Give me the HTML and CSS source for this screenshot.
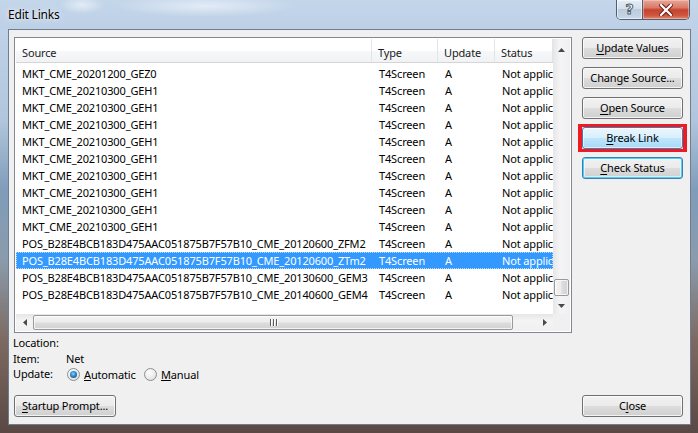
FILE: index.html
```html
<!DOCTYPE html>
<html lang="en">
<head>
<meta charset="utf-8">
<title>Edit Links</title>
<link rel="stylesheet" href="styles.css">
</head>
<body>
<div class="window">
  <div class="titlebar">
    <span class="title">Edit Links</span>
    <div class="caption">
      <div class="cap cap-help">?</div>
      <div class="cap cap-close">
        <svg width="14" height="12" viewBox="0 0 14 12">
          <path d="M2 1 L12 11 M12 1 L2 11" stroke="#6b1e16" stroke-width="4.2" stroke-linecap="square"/>
          <path d="M2 1 L12 11 M12 1 L2 11" stroke="#ffffff" stroke-width="2.2" stroke-linecap="square"/>
        </svg>
      </div>
    </div>
  </div>

  <div class="client">
    <div class="main">
      <div class="listview">
        <div class="lv-view">
          <div class="lv-header">
            <div class="cell c-src">Source</div>
            <div class="cell c-type">Type</div>
            <div class="cell c-upd">Update</div>
            <div class="cell c-stat">Status</div>
          </div>
          <div class="lv-rows">
            <div class="row"><span class="cell c-src">MKT_CME_20201200_GEZ0</span><span class="cell c-type">T4Screen</span><span class="cell c-upd">A</span><span class="cell c-stat">Not applicable</span></div>
            <div class="row"><span class="cell c-src">MKT_CME_20210300_GEH1</span><span class="cell c-type">T4Screen</span><span class="cell c-upd">A</span><span class="cell c-stat">Not applicable</span></div>
            <div class="row"><span class="cell c-src">MKT_CME_20210300_GEH1</span><span class="cell c-type">T4Screen</span><span class="cell c-upd">A</span><span class="cell c-stat">Not applicable</span></div>
            <div class="row"><span class="cell c-src">MKT_CME_20210300_GEH1</span><span class="cell c-type">T4Screen</span><span class="cell c-upd">A</span><span class="cell c-stat">Not applicable</span></div>
            <div class="row"><span class="cell c-src">MKT_CME_20210300_GEH1</span><span class="cell c-type">T4Screen</span><span class="cell c-upd">A</span><span class="cell c-stat">Not applicable</span></div>
            <div class="row"><span class="cell c-src">MKT_CME_20210300_GEH1</span><span class="cell c-type">T4Screen</span><span class="cell c-upd">A</span><span class="cell c-stat">Not applicable</span></div>
            <div class="row"><span class="cell c-src">MKT_CME_20210300_GEH1</span><span class="cell c-type">T4Screen</span><span class="cell c-upd">A</span><span class="cell c-stat">Not applicable</span></div>
            <div class="row"><span class="cell c-src">MKT_CME_20210300_GEH1</span><span class="cell c-type">T4Screen</span><span class="cell c-upd">A</span><span class="cell c-stat">Not applicable</span></div>
            <div class="row"><span class="cell c-src">MKT_CME_20210300_GEH1</span><span class="cell c-type">T4Screen</span><span class="cell c-upd">A</span><span class="cell c-stat">Not applicable</span></div>
            <div class="row"><span class="cell c-src">MKT_CME_20210300_GEH1</span><span class="cell c-type">T4Screen</span><span class="cell c-upd">A</span><span class="cell c-stat">Not applicable</span></div>
            <div class="row"><span class="cell c-src">POS_B28E4BCB183D475AAC051875B7F57B10_CME_20120600_ZFM2</span><span class="cell c-type">T4Screen</span><span class="cell c-upd">A</span><span class="cell c-stat">Not applicable</span></div>
            <div class="row selected"><span class="cell c-src">POS_B28E4BCB183D475AAC051875B7F57B10_CME_20120600_ZTm2</span><span class="cell c-type">T4Screen</span><span class="cell c-upd">A</span><span class="cell c-stat">Not applicable</span></div>
            <div class="row"><span class="cell c-src">POS_B28E4BCB183D475AAC051875B7F57B10_CME_20130600_GEM3</span><span class="cell c-type">T4Screen</span><span class="cell c-upd">A</span><span class="cell c-stat">Not applicable</span></div>
            <div class="row"><span class="cell c-src">POS_B28E4BCB183D475AAC051875B7F57B10_CME_20140600_GEM4</span><span class="cell c-type">T4Screen</span><span class="cell c-upd">A</span><span class="cell c-stat">Not applicable</span></div>
          </div>
        </div>

        <div class="vscroll">
          <div class="sb-btn"><svg width="7" height="4" viewBox="0 0 7 4"><path d="M0 4 L3.5 0 L7 4 Z" fill="#4a4a4a"/></svg></div>
          <div class="vtrack"><div class="vthumb"></div></div>
          <div class="sb-btn"><svg width="7" height="4" viewBox="0 0 7 4"><path d="M0 0 L7 0 L3.5 4 Z" fill="#4a4a4a"/></svg></div>
        </div>

        <div class="hscroll">
          <div class="sb-btn"><svg width="4" height="7" viewBox="0 0 4 7"><path d="M4 0 L4 7 L0 3.5 Z" fill="#4a4a4a"/></svg></div>
          <div class="htrack">
            <div class="hthumb"><span class="grip"></span><span class="grip"></span><span class="grip"></span></div>
          </div>
          <div class="sb-btn"><svg width="4" height="7" viewBox="0 0 4 7"><path d="M0 0 L4 3.5 L0 7 Z" fill="#4a4a4a"/></svg></div>
        </div>

        <div class="sb-corner"></div>
      </div>

      <div class="actions">
        <button class="btn"><u>U</u>pdate Values</button>
        <button class="btn">Chan<u>g</u>e Source...</button>
        <button class="btn"><u>O</u>pen Source</button>
        <div class="mark"><button class="btn btn-hot"><u>B</u>reak Link</button></div>
        <button class="btn btn-default"><u>C</u>heck Status</button>
      </div>
    </div>

    <div class="details">
      <span class="label">Location:</span><span class="value"></span>
      <span class="label">Item:</span><span class="value">Net</span>
      <span class="label">Update:</span>
      <span class="value radios">
        <span class="option opt-auto"><span class="radio checked"></span><span><u>A</u>utomatic</span></span>
        <span class="option"><span class="radio"></span><span><u>M</u>anual</span></span>
      </span>
    </div>

    <div class="footer">
      <button class="btn btn-wide"><u>S</u>tartup Prompt...</button>
      <button class="btn">C<u>l</u>ose</button>
    </div>
  </div>
</div>
</body>
</html>
```

FILE: styles.css
```css
* {
  box-sizing: border-box;
}

html,
body {
  margin: 0;
  padding: 0;
}

body {
  width: 698px;
  height: 433px;
  overflow: hidden;
  font-family: "Noto Sans", "DejaVu Sans", sans-serif;
  font-size: 11px;
  letter-spacing: -0.15px;
  color: #000;
  background: #5a4744;
}

/* ---------- glass frame ---------- */
.window {
  width: 698px;
  height: 433px;
  display: flex;
  flex-direction: column;
  border-radius: 6px 6px 0 0;
  background:
    linear-gradient(to bottom,
      #c9d9eb 0px,
      #bfd2e7 30px,
      #b1c6dc 120px,
      #7f9cba 190px,
      #8b9bab 260px,
      #7c6a62 340px,
      #5a4845 433px);
}

.titlebar {
  height: 29px;
  display: flex;
  justify-content: space-between;
  align-items: flex-start;
  padding: 0 8px;
  background:
    radial-gradient(ellipse 22px 9px at 82px 5px, rgba(255, 255, 255, 0.55), rgba(255, 255, 255, 0)),
    radial-gradient(ellipse 90px 11px at 205px 6px, rgba(236, 243, 250, 0.75), rgba(236, 243, 250, 0)),
    linear-gradient(to bottom, #c4d6ea, #bdd0e6);
}

.title {
  margin-top: 7px;
  line-height: 16px;
  font-size: 12px;
  letter-spacing: -0.2px;
  color: #000;
  text-shadow: 0 0 6px rgba(255, 255, 255, 0.95), 0 0 2px rgba(255, 255, 255, 0.8);
}

.caption {
  display: flex;
  height: 20px;
  border: 1px solid #4d5f74;
  border-top: 0;
  border-radius: 0 0 5px 5px;
  overflow: hidden;
}

.cap {
  display: flex;
  align-items: center;
  justify-content: center;
}

.cap-help {
  width: 26px;
  border-right: 1px solid #4d5f74;
  background: linear-gradient(to bottom, #e6eef6 0%, #d3dfec 45%, #bccbdc 50%, #c9d7e6 100%);
  box-shadow: inset 0 0 0 1px rgba(255, 255, 255, 0.55);
  font: bold 14px "DejaVu Sans", sans-serif;
  letter-spacing: 0;
  color: #fff;
  -webkit-text-stroke: 1px #4f5d6d;
  padding-bottom: 1px;
}

.cap-close {
  width: 46px;
  background: linear-gradient(to bottom, #e8a698 0%, #d87a68 40%, #c6432f 52%, #d0543c 80%, #e0876a 100%);
  box-shadow: inset 0 0 0 1px rgba(255, 220, 210, 0.45);
}

/* ---------- dialog body ---------- */
.client {
  margin: 0 7px 0 8px;
  height: 396px;
  border: 1px solid #6e7e90;
  background: #f0f0f0;
  display: flex;
  flex-direction: column;
  padding: 7px 7px 7px 5px;
}

.main {
  display: flex;
  gap: 10px;
}

/* ---------- list view ---------- */
.listview {
  width: 558px;
  height: 296px;
  border: 1px solid #828790;
  padding: 1px;
  background: #fff;
  display: grid;
  grid-template-columns: 537px 17px;
  grid-template-rows: 275px 17px;
}

.lv-view {
  overflow: hidden;
  background: #fff;
}

.lv-header {
  display: grid;
  grid-template-columns: 356px 66px 57px 58px;
  height: 24px;
  border-bottom: 1px solid #d5d5d5;
  background: linear-gradient(to bottom, #ffffff 0%, #ffffff 50%, #f7f8fa 51%, #f1f2f4 100%);
}

.lv-header .cell {
  padding-top: 6px;
  line-height: 16px;
  border-right: 1px solid #e3e4e6;
  color: #1b1b1b;
}

.cell {
  display: block;
  overflow: hidden;
  white-space: nowrap;
  padding-left: 6px;
}

.lv-rows {
  padding-top: 2px;
}

.row {
  display: grid;
  grid-template-columns: 356px 66px 57px 58px;
  height: 17px;
  line-height: 15px;
  padding-top: 1px;
}

.row .cell {
  padding-left: 7px;
}

.row .c-src {
  padding-left: 6px;
}

.row.selected {
  background: #3399ff;
  color: #fff;
  outline: 1px dotted #b9dcff;
  outline-offset: -1px;
}

/* ---------- scroll bars ---------- */
.vscroll {
  display: flex;
  flex-direction: column;
  background: linear-gradient(to right, #e6e6e6, #f4f4f4 40%, #f0f0f0);
}

.hscroll {
  display: flex;
  background: linear-gradient(to bottom, #e6e6e6, #f4f4f4 40%, #f0f0f0);
}

.sb-btn {
  width: 17px;
  height: 17px;
  flex: none;
  display: flex;
  align-items: center;
  justify-content: center;
}

.vscroll .sb-btn:first-child {
  padding-top: 4px;
}

.vtrack {
  flex: 1;
  display: flex;
  flex-direction: column;
  justify-content: flex-end;
  align-items: center;
  padding-bottom: 1px;
}

.vthumb {
  width: 15px;
  height: 17px;
  border: 1px solid #999999;
  border-radius: 2px;
  background: linear-gradient(to right, #f4f4f4 0%, #ececec 45%, #dcdcdc 55%, #d2d2d2 100%);
  box-shadow: inset 0 0 0 1px rgba(255, 255, 255, 0.7);
}

.htrack {
  flex: 1;
  display: flex;
  align-items: center;
  padding-right: 20px;
}

.hthumb {
  width: 480px;
  height: 15px;
  border: 1px solid #999999;
  border-radius: 2px;
  background: linear-gradient(to bottom, #f4f4f4 0%, #ececec 45%, #dcdcdc 55%, #d2d2d2 100%);
  box-shadow: inset 0 0 0 1px rgba(255, 255, 255, 0.7);
  display: flex;
  justify-content: center;
  align-items: center;
  gap: 2px;
}

.grip {
  width: 1px;
  height: 7px;
  background: #5a5a5a;
  box-shadow: 1px 0 0 #fff;
}

.sb-corner {
  background: #f0f0f0;
}

/* ---------- push buttons ---------- */
.actions {
  display: flex;
  flex-direction: column;
  gap: 8px;
}

.btn {
  display: block;
  width: 101px;
  height: 22px;
  padding: 0 0 1px;
  border: 1px solid #707070;
  border-radius: 3px;
  background: linear-gradient(to bottom, #f2f2f2 0%, #ebebeb 48%, #dddddd 52%, #cfcfcf 100%);
  box-shadow: inset 0 0 0 1px rgba(255, 255, 255, 0.75);
  font: inherit;
  letter-spacing: inherit;
  color: #000;
  line-height: 18px;
  text-align: center;
  white-space: nowrap;
}

.btn u {
  text-underline-offset: 2px;
}

.btn-hot {
  border-color: #3c7fb1;
  background: linear-gradient(to bottom, #eaf6fd 0%, #d9f0fc 48%, #bee6fd 52%, #a7d9f5 100%);
  box-shadow: inset 0 0 0 1px rgba(255, 255, 255, 0.6);
}

.btn-default {
  border-color: #3c7fb1;
  box-shadow: inset 0 0 0 1px #48d2fb, inset 0 0 0 2px rgba(255, 255, 255, 0.5);
}

.mark {
  margin: -3px -4px;
  border: 3px solid #ed1c24;
  border-left-width: 4px;
  border-right-width: 4px;
  width: 109px;
}

/* ---------- link details ---------- */
.details {
  margin: 2px 0 0 -1px;
  display: grid;
  grid-template-columns: 53px 1fr;
  grid-template-rows: 16px 15px 16px;
  line-height: 15px;
}

.label,
.value {
  display: flex;
  align-items: flex-start;
  white-space: nowrap;
}

.radios {
  display: flex;
  align-items: center;
  padding-left: 1px;
}

.option {
  display: flex;
  align-items: center;
  gap: 4px;
}

.opt-auto {
  width: 77px;
}

.radio {
  width: 13px;
  height: 13px;
  border-radius: 50%;
  border: 1px solid #8e8f8f;
  background: radial-gradient(circle at 40% 35%, #ffffff 0%, #e8e8e8 60%, #d0d0d0 100%);
  display: flex;
  align-items: center;
  justify-content: center;
}

.radio.checked::after {
  content: "";
  width: 7px;
  height: 7px;
  border-radius: 50%;
  background: radial-gradient(circle at 45% 40%, #8fd3f8 0%, #2b86cf 45%, #0d3f73 100%);
}

/* ---------- bottom buttons ---------- */
.footer {
  margin-top: 13px;
  display: flex;
  justify-content: space-between;
}

.btn-wide {
  width: 102px;
}
```
